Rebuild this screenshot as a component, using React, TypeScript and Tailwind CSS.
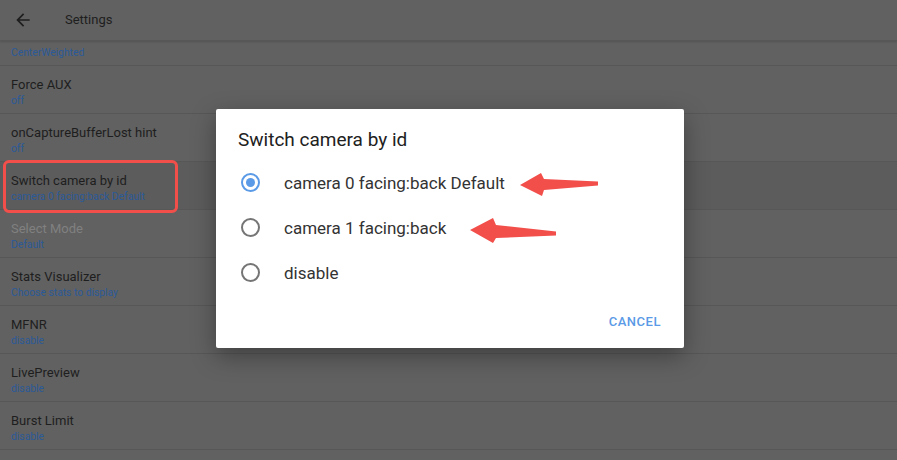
import React from "react";

const rows: { title: string; sub: string; disabled?: boolean; pressed?: boolean }[] = [
  { title: "Force AUX", sub: "off" },
  { title: "onCaptureBufferLost hint", sub: "off" },
  { title: "Switch camera by id", sub: "camera 0 facing:back Default", pressed: true },
  { title: "Select Mode", sub: "Default", disabled: true },
  { title: "Stats Visualizer", sub: "Choose stats to display" },
  { title: "MFNR", sub: "disable" },
  { title: "LivePreview", sub: "disable" },
  { title: "Burst Limit", sub: "disable" },
];

function Radio({ checked }: { checked?: boolean }) {
  return (
    <div
      className={
        "w-[19px] h-[19px] rounded-full border-2 flex items-center justify-center " +
        (checked ? "border-[#5a9ae6]" : "border-[#757575]")
      }
    >
      {checked && <div className="w-[9px] h-[9px] rounded-full bg-[#5a9ae6]" />}
    </div>
  );
}

export default function App() {
  return (
    <div
      className="relative w-[897px] h-[460px] overflow-hidden bg-[#616161]"
      style={{ fontFamily: "Roboto, 'Noto Sans', sans-serif" }}
    >
      <div className="h-[41px] flex items-center border-b border-[#575757] shadow-[0_1px_2px_rgba(0,0,0,0.15)] relative z-10 bg-[#616161]">
        <svg width="20" height="20" viewBox="0 0 24 24" className="ml-[13px]" fill="#1e1e1e">
          <path d="M20 11H7.83l5.59-5.59L12 4l-8 8 8 8 1.41-1.41L7.83 13H20v-2z" />
        </svg>
        <div className="ml-[32px] text-[13px] text-[#1e1e1e] leading-[16px]">Settings</div>
      </div>
      <div className="flex flex-col">
        <div className="h-[25px] border-b border-[#575757] flex flex-col justify-end pl-[11px] pb-[6px]">
          <div className="text-[10.3px] leading-[12px] text-[#2b5a99]">CenterWeighted</div>
        </div>
        {rows.map((r) => (
          <div
            key={r.title}
            className={
              "h-[48px] border-b border-[#575757] pl-[11px] pt-[11px] " +
              (r.pressed ? "bg-[#5c5c5c]" : "")
            }
          >
            <div
              className={
                "text-[13px] leading-[16px] " + (r.disabled ? "text-[#808080]" : "text-[#1e1e1e]")
              }
            >
              {r.title}
            </div>
            <div className="mt-[2px] text-[10.3px] leading-[12px] text-[#2b5a99]">{r.sub}</div>
          </div>
        ))}
      </div>

      <div className="absolute left-[3px] top-[160px] w-[175px] h-[53px] rounded-[6px] border-[3px] border-[#f24f4b]" />

      <div className="absolute left-[216px] top-[109px] w-[468px] h-[239px] bg-white rounded-[2px] shadow-[0_8px_24px_rgba(0,0,0,0.35)] flex flex-col">
        <div className="pt-[19px] pl-[22px] text-[19px] leading-[24px] text-[#212121]">
          Switch camera by id
        </div>
        <div className="mt-[8px] flex flex-col">
          {[
            { label: "camera 0 facing:back Default", checked: true },
            { label: "camera 1 facing:back" },
            { label: "disable" },
          ].map((o) => (
            <div key={o.label} className="h-[45px] flex items-center">
              <div className="ml-[24px] w-[20px] flex justify-center">
                <Radio checked={o.checked} />
              </div>
              <div className="ml-[24px] text-[17px] leading-[20px] text-[#333333]">{o.label}</div>
            </div>
          ))}
        </div>
        <div className="mt-[9px] flex justify-end pr-[23px]">
          <div className="h-[36px] flex items-center text-[13px] font-medium tracking-[0.04em] text-[#5a9ae6]">
            CANCEL
          </div>
        </div>
      </div>

      <svg className="absolute left-0 top-0" width="897" height="460" viewBox="0 0 897 460">
        <polygon
          points="520,185 541,173 544,179 598,181.5 598,185.5 544,190 542,196"
          fill="#f24f4b"
        />
        <polygon
          points="470,230 493,218 496,225 556,231.5 556,235.5 496,238 493,243"
          fill="#f24f4b"
        />
      </svg>
    </div>
  );
}
